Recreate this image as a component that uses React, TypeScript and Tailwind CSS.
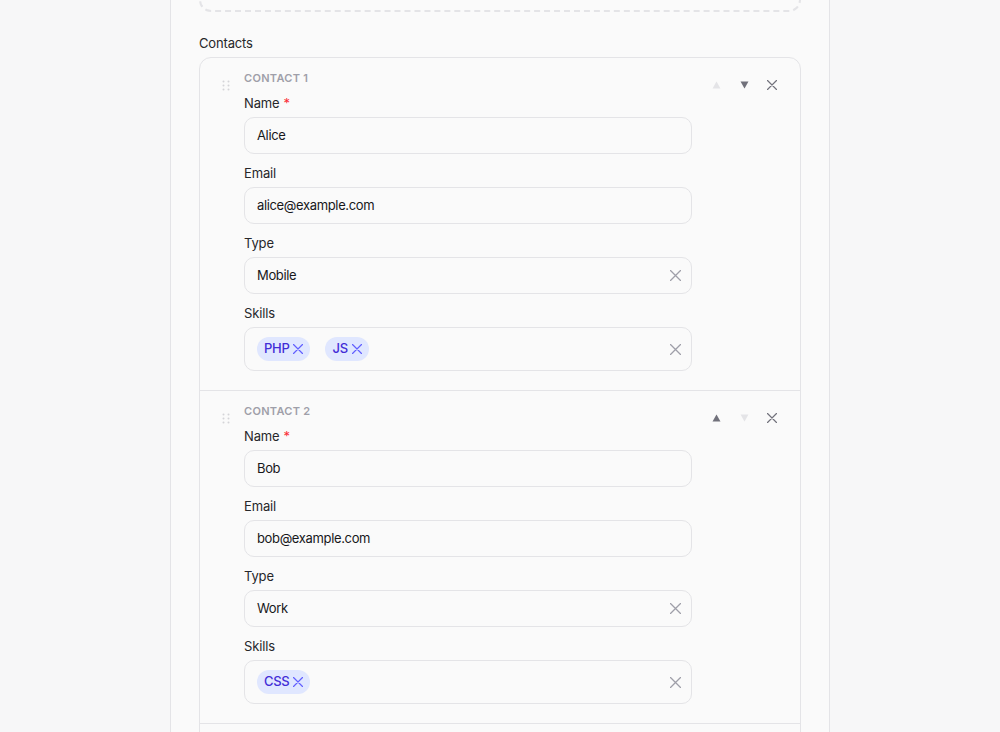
type Contact = {
  name: string
  email: string
  type: string
  skills: string[]
}

const contacts: Contact[] = [
  { name: 'Alice', email: 'alice@example.com', type: 'Mobile', skills: ['PHP', 'JS'] },
  { name: 'Bob', email: 'bob@example.com', type: 'Work', skills: ['CSS'] },
]

const Cross = ({ size, className, stroke = 1.3 }: { size: number; className?: string; stroke?: number }) => (
  <svg width={size} height={size} viewBox={`0 0 ${size} ${size}`} className={className}>
    <path
      d={`M0.5 0.5 L${size - 0.5} ${size - 0.5} M${size - 0.5} 0.5 L0.5 ${size - 0.5}`}
      stroke="currentColor"
      strokeWidth={stroke}
      strokeLinecap="round"
      fill="none"
    />
  </svg>
)

const DragHandle = () => (
  <svg width="8" height="11" viewBox="0 0 8 11" className="text-zinc-300">
    {[1.5, 5.5, 9.5].map((y) =>
      [1.5, 6.5].map((x) => <circle key={`${x}-${y}`} cx={x} cy={y} r="1" fill="currentColor" />)
    )}
  </svg>
)

const Triangle = ({ up, disabled }: { up?: boolean; disabled?: boolean }) => (
  <button className="w-6 h-6 flex items-center justify-center">
    <svg width="9" height="8" viewBox="0 0 9 8" className={disabled ? 'text-zinc-200' : 'text-zinc-500'}>
      <path d={up ? 'M4.5 0.5 L8.5 7.5 L0.5 7.5 Z' : 'M0.5 0.5 L8.5 0.5 L4.5 7.5 Z'} fill="currentColor" />
    </svg>
  </button>
)

const Field = ({ label, required, children }: { label: string; required?: boolean; children: React.ReactNode }) => (
  <div className="flex flex-col gap-[6px]">
    <label className="text-[13px] leading-4 text-zinc-800">
      {label}
      {required && <span className="text-red-500 ml-1">*</span>}
    </label>
    {children}
  </div>
)

const TextInput = ({ value }: { value: string }) => (
  <div className="h-[37px] flex items-center px-3 rounded-[10px] border border-zinc-200 bg-[#fafafa] text-[13px] tracking-[-0.35px] text-zinc-900">
    {value}
  </div>
)

const SelectInput = ({ value }: { value: string }) => (
  <div className="h-[37px] flex items-center justify-between pl-3 pr-[10px] rounded-[10px] border border-zinc-200 bg-[#fafafa] text-[13px] tracking-[-0.35px] text-zinc-900">
    <span>{value}</span>
    <Cross size={11} className="text-zinc-400" />
  </div>
)

const TagInput = ({ tags }: { tags: string[] }) => (
  <div className="h-[44px] flex items-center justify-between pl-3 pr-[10px] rounded-[10px] border border-zinc-200 bg-[#fafafa]">
    <div className="flex items-center gap-[15px]">
      {tags.map((t) => (
        <span
          key={t}
          className="h-6 flex items-center gap-[4px] pl-[7px] pr-[7px] rounded-full bg-indigo-100 text-indigo-700 text-[13px] tracking-[-0.3px] font-medium"
        >
          {t}
          <Cross size={10} stroke={1.2} className="text-indigo-500" />
        </span>
      ))}
    </div>
    <Cross size={11} className="text-zinc-400" />
  </div>
)

const ContactItem = ({ contact, index }: { contact: Contact; index: number }) => (
  <div className="flex pl-4 pr-4 pt-3 pb-[19px] border-t first:border-t-0 border-zinc-200">
    <div className="w-5 flex justify-center pt-[10px]">
      <DragHandle />
    </div>
    <div className="flex-1 ml-2 flex flex-col">
      <div className="text-[11px] leading-4 font-semibold tracking-[0.3px] text-zinc-400 uppercase">
        Contact {index + 1}
      </div>
      <div className="mt-[9px] flex flex-col gap-[11px]">
        <Field label="Name" required>
          <TextInput value={contact.name} />
        </Field>
        <Field label="Email">
          <TextInput value={contact.email} />
        </Field>
        <Field label="Type">
          <SelectInput value={contact.type} />
        </Field>
        <Field label="Skills">
          <TagInput tags={contact.skills} />
        </Field>
      </div>
    </div>
    <div className="ml-3 mt-[3px] flex items-start gap-1 h-6">
      <Triangle up disabled={index === 0} />
      <Triangle disabled={index === 1} />
      <button className="w-6 h-6 flex items-center justify-center text-zinc-500">
        <Cross size={10} stroke={1.2} />
      </button>
    </div>
  </div>
)

export default function App() {
  return (
    <div
      className="h-[732px] overflow-hidden bg-[#f7f7f8] tracking-[-0.15px]"
      style={{ fontFamily: 'Inter, "Noto Sans", sans-serif' }}
    >
      <div className="w-[660px] mx-auto h-full flex flex-col bg-[#fafafa] border-x border-zinc-200 px-[28px]">
        <div className="h-[60px] shrink-0 -mt-[48px] rounded-xl border-2 border-dashed border-zinc-200" />
        <div className="mt-[23px] text-[13px] leading-4 text-zinc-800">Contacts</div>
        <div className="mt-[6px] shrink-0 rounded-xl border border-zinc-200">
          {contacts.map((c, i) => (
            <ContactItem key={i} contact={c} index={i} />
          ))}
          {/* next row starts below the fold */}
          <div className="h-10 border-t border-zinc-200" />
        </div>
      </div>
    </div>
  )
}
